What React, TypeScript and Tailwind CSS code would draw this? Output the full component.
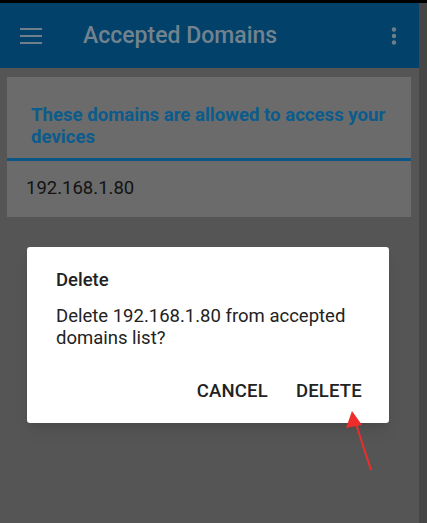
import React from 'react';

const font = { fontFamily: 'Roboto, "Liberation Sans", sans-serif' };

const App: React.FC = () => {
  return (
    <div className="relative w-[427px] h-[523px] overflow-hidden bg-[#555555]" style={font}>
      {/* status bar edge */}
      <div className="h-[3px] bg-black" />

      <div className="flex h-[520px]">
        {/* Main screen (dimmed behind dialog) */}
        <div className="w-[419px] flex flex-col">
          {/* App bar */}
          <header className="h-[65px] bg-[#02416a] flex items-center pl-[20px] pr-[22px]">
            <svg width="22" height="16" viewBox="0 0 22 16" className="shrink-0">
              <rect x="0" y="0" width="22" height="2" fill="#6f808c" />
              <rect x="0" y="7" width="22" height="2" fill="#6f808c" />
              <rect x="0" y="14" width="22" height="2" fill="#6f808c" />
            </svg>
            <h1 className="ml-[41px] text-[23px] leading-[28px] text-[#72838f] font-medium flex-1">
              Accepted Domains
            </h1>
            <svg width="6" height="18" viewBox="0 0 6 18">
              <circle cx="3" cy="2.5" r="2.2" fill="#6f808c" />
              <circle cx="3" cy="9" r="2.2" fill="#6f808c" />
              <circle cx="3" cy="15.5" r="2.2" fill="#6f808c" />
            </svg>
          </header>

          {/* Card */}
          <section className="mt-[9px] ml-[7px] w-[404px] bg-[#6a6b6a]">
            <div className="pt-[27px] pl-[24px] pr-[8px] pb-[10px] border-b-[3px] border-[#0b5684]">
              <p className="text-[18.6px] leading-[22px] font-bold text-[#0b5b8d]">
                These domains are allowed to access your devices
              </p>
            </div>
            <div className="h-[56px] flex items-center pl-[19px] text-[18.5px] text-[#131313]">
              192.168.1.80
            </div>
          </section>
        </div>

        {/* right edge strip */}
        <div className="w-[8px] bg-[#464646]" />
      </div>

      {/* Dialog */}
      <div className="absolute left-[27px] top-[247px] w-[362px] h-[176px] bg-white rounded-[3px] shadow-lg pl-[29px] pr-[27px] pt-[23px]">
        <h2 className="text-[18.5px] leading-[20px] font-medium text-[#222222]">Delete</h2>
        <p className="mt-[15px] text-[18.5px] leading-[22px] text-[#222222]">
          Delete 192.168.1.80 from accepted domains list?
        </p>
        <div className="mt-[31px] flex justify-end gap-[28px] text-[18.5px] leading-[22px] font-medium text-[#222222] tracking-[0.2px]">
          <span>CANCEL</span>
          <span>DELETE</span>
        </div>
      </div>

      {/* annotation arrow */}
      <svg className="absolute left-0 top-0 pointer-events-none" width="427" height="523">
        <line x1="371" y1="470" x2="356" y2="424" stroke="#ee2c2c" strokeWidth="2" />
        <polygon points="352,411 346,428 362,425" fill="#ee2c2c" />
      </svg>
    </div>
  );
};

export default App;
